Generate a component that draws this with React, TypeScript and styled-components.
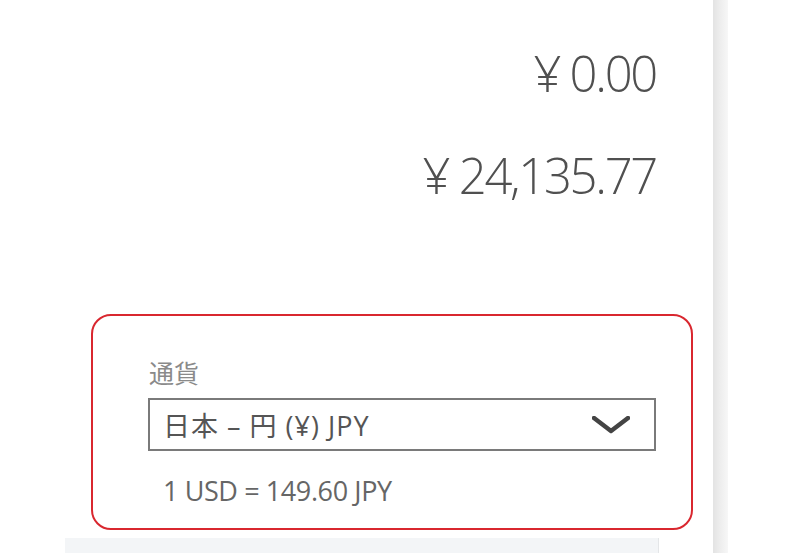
import React from "react";
import styled, { createGlobalStyle } from "styled-components";

const Global = createGlobalStyle`
  html, body { margin: 0; padding: 0; background: #ffffff; }
  body { font-family: "Open Sans", "Noto Sans CJK JP", sans-serif; }
`;

const Page = styled.div`
  width: 800px;
  height: 553px;
  display: flex;
  overflow: hidden;
  background: #ffffff;
`;

const Main = styled.div`
  width: 713px;
  display: flex;
  flex-direction: column;
`;

const Divider = styled.div`
  width: 15px;
  background: linear-gradient(to right, #e3e3e3 0%, #ececec 40%, #f7f7f7 100%);
`;

const Amounts = styled.div`
  display: flex;
  flex-direction: column;
  align-items: flex-end;
  padding-right: 57px;
  padding-top: 49px;
  gap: 53px;
  height: 270px;
  box-sizing: border-box;
`;

const Amount = styled.div`
  font-family: "Open Sans", sans-serif;
  font-weight: 350;
  font-size: 49px;
  line-height: 49px;
  color: #505050;
  letter-spacing: -2.3px;
  white-space: nowrap;
`;

const Highlight = styled.section`
  margin-left: 91px;
  margin-top: 44px;
  width: 602px;
  height: 216px;
  box-sizing: border-box;
  border: 2.5px solid #d9272f;
  border-radius: 20px;
  padding: 41px 0 0 55px;
  display: flex;
  flex-direction: column;
`;

const Label = styled.div`
  font-family: "Noto Sans CJK JP", sans-serif;
  font-size: 25px;
  line-height: 30px;
  color: #8a8a8a;
  margin-left: 1px;
`;

const Select = styled.div`
  margin-top: 11px;
  width: 508px;
  height: 53px;
  box-sizing: border-box;
  border: 2px solid #7a7a7a;
  display: flex;
  align-items: center;
  justify-content: space-between;
  padding: 0 24px 0 13px;
`;

const SelectText = styled.span`
  font-family: "Open Sans", "Noto Sans CJK JP", sans-serif;
  font-size: 27px;
  color: #555555;
  letter-spacing: 1px;
`;

const Rate = styled.div`
  margin-top: 25px;
  margin-left: 15px;
  font-family: "Open Sans", sans-serif;
  font-size: 27px;
  line-height: 30px;
  color: #666666;
  letter-spacing: -0.4px;
`;

const Strip = styled.div`
  margin-top: 8px;
  margin-left: 65px;
  width: 593px;
  flex: 1;
  background: #f3f5f7;
  border-right: 1px solid #e4e6e8;
`;

const Chevron = () => (
  <svg width="38" height="18" viewBox="0 0 38 18" fill="none">
    <polyline points="2,2 19,15 36,2" stroke="#444444" strokeWidth="4.5" strokeLinecap="round" strokeLinejoin="round" />
  </svg>
);

export default function App() {
  return (
    <>
      <Global />
      <Page>
        <Main>
          <Amounts>
            <Amount>¥ 0.00</Amount>
            <Amount>¥ 24,135.77</Amount>
          </Amounts>
          <Highlight>
            <Label>通貨</Label>
            <Select>
              <SelectText>日本 – 円 (¥) JPY</SelectText>
              <Chevron />
            </Select>
            <Rate>1 USD = 149.60 JPY</Rate>
          </Highlight>
          <Strip />
        </Main>
        <Divider />
      </Page>
    </>
  );
}
